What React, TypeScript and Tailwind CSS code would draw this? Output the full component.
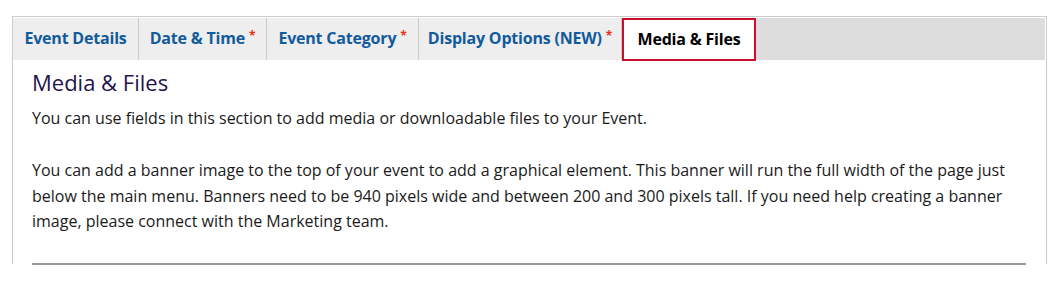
const tabs = [
  { label: "Event Details", required: false, w: "w-[126px]" },
  { label: "Date & Time", required: true, w: "w-[128px]" },
  { label: "Event Category", required: true, w: "w-[152px]" },
  { label: "Display Options (NEW)", required: true, w: "w-[203px]" },
];

const App = () => {
  return (
    <div className="h-[283px] bg-white px-3 pt-4 font-['Open_Sans',sans-serif]">
      <div className="h-[248px] border border-b-0 border-[#cccccc] pt-px pr-px">
        <div className="flex h-[42px] bg-[#dddddd]">
          {tabs.map((t) => (
            <div
              key={t.label}
              className={`flex ${t.w} items-center justify-center border-r border-[#cccccc] bg-[#eeeeee] pb-[3px] text-[16px] font-bold tracking-[-0.2px] text-[#125b9c]`}
            >
              {t.label}
              {t.required && (
                <span className="mb-1 ml-1 text-[12px] text-[#e8321a]">*</span>
              )}
            </div>
          ))}
          <div className="flex h-[43px] w-[134px] items-center justify-center border-2 border-[#c8102e] bg-white pb-[2px] text-[16px] font-bold tracking-[-0.2px] text-black">
            Media &amp; Files
          </div>
        </div>
        <div className="px-[19px] pt-[6px]">
          <h2 className="text-[22px] font-medium leading-[32px] text-[#1f1450]">
            Media &amp; Files
          </h2>
          <p className="mt-[8px] text-[16px] leading-[25.5px] text-[#1a1a1a]">
            You can use fields in this section to add media or downloadable
            files to your Event.
          </p>
          <p className="mt-[26.75px] text-[16px] leading-[25.5px] text-[#1a1a1a]">
            You can add a banner image to the top of your event to add a
            graphical element. This banner will run the full width of the page
            just below the main menu. Banners need to be 940 pixels wide and
            between 200 and 300 pixels tall. If you need help creating a banner
            image, please connect with the Marketing team.
          </p>
          <div className="mt-[28px] h-[2px] bg-[#999999]" />
        </div>
      </div>
    </div>
  );
};

export default App;
